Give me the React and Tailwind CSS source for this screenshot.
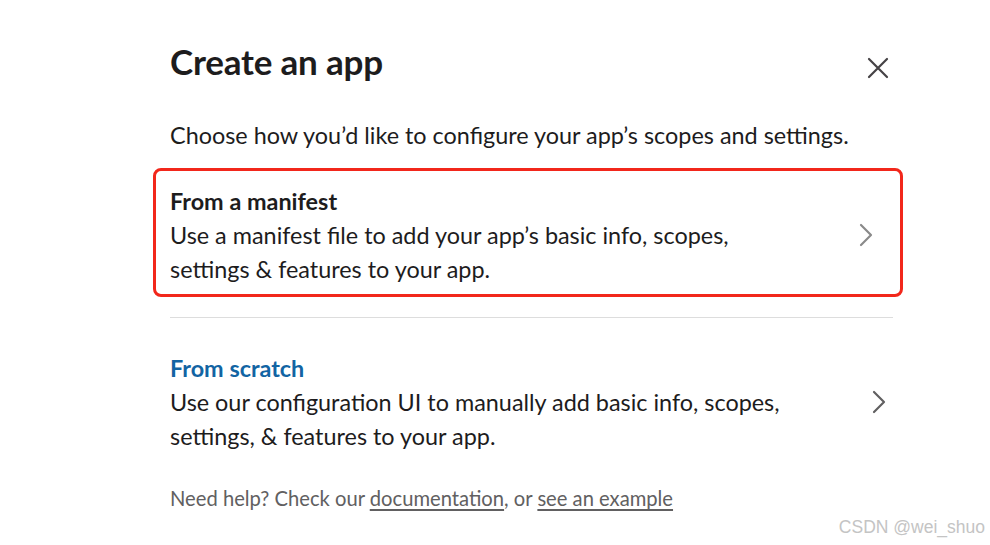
import React from "react";

function Chevron({ color }) {
  return (
    <svg width="14" height="24" viewBox="0 0 14 24" fill="none">
      <path d="M2 2 L12 12 L2 22" stroke={color} strokeWidth="2.2" strokeLinecap="round" strokeLinejoin="round" />
    </svg>
  );
}

export default function App() {
  return (
    <div className="relative w-[990px] h-[545px] bg-white overflow-hidden text-[#1d1c1d]" style={{ fontFamily: "Lato, 'Noto Sans', sans-serif" }}>
      <div className="pl-[170px] pr-[97px] pt-[41px]">
        <div className="flex justify-between items-start">
          <h1 className="text-[35px] leading-[40px] font-bold tracking-[-0.2px]">Create an app</h1>
          <svg className="mt-[16px] mr-[4px]" width="22" height="22" viewBox="0 0 22 22" fill="none">
            <path d="M2 2 L20 20 M20 2 L2 20" stroke="#454245" strokeWidth="2.2" strokeLinecap="round" />
          </svg>
        </div>
        <p className="mt-[37px] text-[23.4px] leading-[34px]">Choose how you’d like to configure your app’s scopes and settings.</p>
        <div className="mt-[16px] -ml-[17px] -mr-[10px] border-[3px] border-[#f2271b] rounded-[8px] pl-[14px] pr-[27px] pt-[13px] pb-[8px] flex justify-between items-center">
          <div>
            <div className="text-[23.4px] leading-[34px] font-bold">From a manifest</div>
            <div className="text-[23.4px] leading-[34px]">
              Use a manifest file to add your app’s basic info, scopes,
              <br />
              settings &amp; features to your app.
            </div>
          </div>
          <Chevron color="#8a8a8a" />
        </div>
        <div className="mt-[20px] h-px bg-[#dddddd]" />
        <div className="mt-[33px] flex justify-between items-center pr-[7px]">
          <div>
            <div className="text-[23.4px] leading-[34px] font-bold text-[#1264a3]">From scratch</div>
            <div className="text-[23.4px] leading-[34px]">
              Use our configuration UI to manually add basic info, scopes,
              <br />
              settings, &amp; features to your app.
            </div>
          </div>
          <Chevron color="#616061" />
        </div>
        <p className="mt-[31px] text-[20.2px] leading-[28px] text-[#616061]">
          Need help? Check our <span className="underline underline-offset-[3px]">documentation</span>, or{" "}
          <span className="underline underline-offset-[3px]">see an example</span>
        </p>
      </div>
      <div className="absolute right-[5px] bottom-[8px] text-[17.5px] leading-[20px] text-[#c4c4c4]" style={{ fontFamily: "'Liberation Sans', Arial, sans-serif" }}>
        CSDN @wei_shuo
      </div>
    </div>
  );
}
